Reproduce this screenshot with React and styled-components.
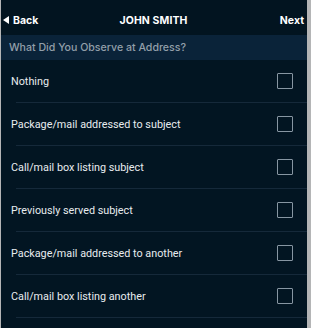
import React, { useState } from 'react';
import styled, { createGlobalStyle } from 'styled-components';

const GlobalStyles = createGlobalStyle`
    html, body {
        margin: 0;
        padding: 0;
        background: #b4b5b6;
        overflow: hidden;
    }
`;

const Screen = styled.div`
    margin-left: 1px;
    width: 306px;
    height: 328px;
    background: #021522;
    display: flex;
    flex-direction: column;
    overflow: hidden;
`;

const Header = styled.div`
    height: 35px;
    box-sizing: border-box;
    padding: 5px 3px 0 2px;
    display: grid;
    grid-template-columns: 1fr auto 1fr;
    align-items: center;
    background: #021420;
    color: #ffffff;
    font-family: Inter, 'Noto Sans', sans-serif;
    font-weight: 700;
    font-size: 10.5px;
`;

const NavLink = styled.span`
    display: flex;
    align-items: center;
    gap: 4px;
    justify-self: ${p => (p.right ? 'end' : 'start')};
`;

const Title = styled.span`
    letter-spacing: 0.1px;
`;

const SectionTitle = styled.div`
    height: 25px;
    display: flex;
    align-items: center;
    padding-left: 8px;
    background: #0a2339;
    color: #929fa9;
    font-family: Inter, 'Noto Sans', sans-serif;
    font-weight: 500;
    font-size: 10.6px;
`;

const List = styled.div`
    display: flex;
    flex-direction: column;
`;

const Row = styled.label`
    height: 42px;
    display: flex;
    align-items: center;
    justify-content: space-between;
    padding: 0 14px 0 10px;
    border-bottom: 1px solid #15293a;
    position: relative;
    color: #e8ecef;
    font-family: Roboto, 'Liberation Sans', sans-serif;
    font-size: 10.8px;
    cursor: pointer;

    &::after {
        content: '';
        position: absolute;
        left: 0;
        bottom: -1px;
        width: 15px;
        height: 1px;
        background: #021522;
    }
`;

const Box = styled.span`
    width: 14px;
    height: 14px;
    border: 1.5px solid #8796a2;
    border-radius: 1px;
    background: ${p => (p.checked ? '#8796a2' : 'transparent')};
`;

const options = [
    'Nothing',
    'Package/mail addressed to subject',
    'Call/mail box listing subject',
    'Previously served subject',
    'Package/mail addressed to another',
    'Call/mail box listing another',
];

export default function App() {
    const [checked, setChecked] = useState({});

    return (
        <>
            <GlobalStyles />
            <Screen>
                <Header>
                    <NavLink>
                        <svg width="6" height="8" viewBox="0 0 6 8">
                            <path d="M6 0 L0 4 L6 8 Z" fill="#fff" />
                        </svg>
                        Back
                    </NavLink>
                    <Title>JOHN SMITH</Title>
                    <NavLink right>Next</NavLink>
                </Header>
                <SectionTitle>What Did You Observe at Address?</SectionTitle>
                <List>
                    {options.map(opt => (
                        <Row key={opt} onClick={() => setChecked(c => ({ ...c, [opt]: !c[opt] }))}>
                            {opt}
                            <Box checked={checked[opt]} />
                        </Row>
                    ))}
                </List>
            </Screen>
        </>
    );
}
